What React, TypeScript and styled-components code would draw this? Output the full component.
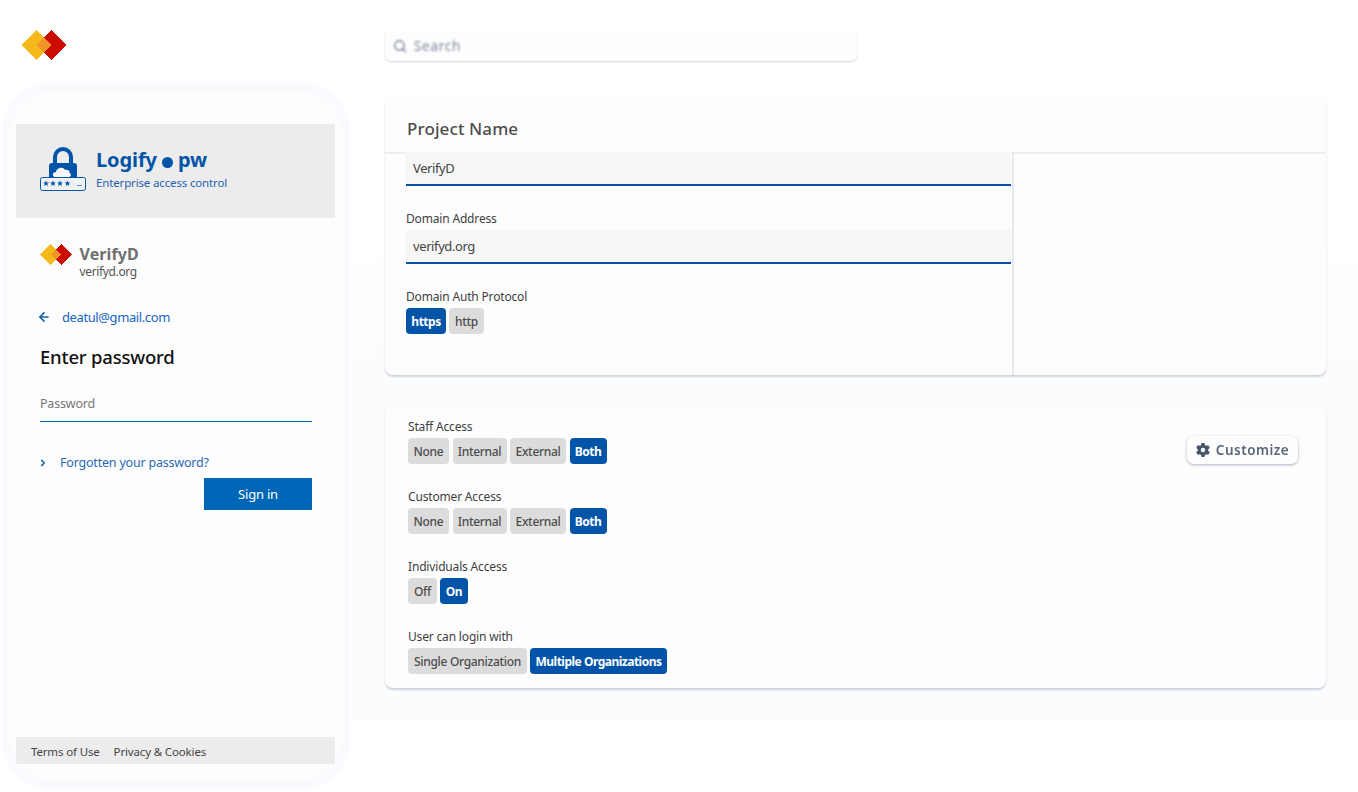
import React from "react";
import styled, { createGlobalStyle } from "styled-components";
import { ArrowLeft, ChevronRight, Search as SearchIcon } from "lucide-react";
import { FaGear } from "react-icons/fa6";

const Global = createGlobalStyle`
  html, body { margin: 0; padding: 0; background: #fff; overflow: hidden; }
  * { box-sizing: border-box; }
  body { font-family: "Noto Sans", "Open Sans", sans-serif; }
`;

const Page = styled.div`
  width: 1358px;
  height: 792px;
  display: grid;
  grid-template-columns: 352px 1fr;
  background: #fff;
`;

const LeftColumn = styled.aside`
  display: flex;
  flex-direction: column;
  padding: 30px 2px 2px 2px;
`;

const TopLogo = styled.div`
  height: 52px;
  padding-left: 19px;
  display: flex;
  align-items: flex-start;
`;

const Frame = styled.div`
  flex: 1;
  border-radius: 48px;
  background: #f9fbfe;
  padding: 10px 8px;
  display: flex;
`;

const LoginPanel = styled.div`
  flex: 1;
  border-radius: 40px;
  background: #fdfdfe;
  padding: 32px 7px 16px 6px;
  display: flex;
  flex-direction: column;
`;

const BrandBar = styled.div`
  height: 94px;
  background: #ececec;
  display: flex;
  align-items: center;
  gap: 10px;
  padding: 0 0 0 24px;
`;

const LogoSlot = styled.div`
  margin-top: -4px;
  display: flex;
`;

const BrandText = styled.div`
  display: flex;
  flex-direction: column;
  gap: 2px;
  margin-top: -5px;
`;

const BrandName = styled.div`
  font-size: 20px;
  line-height: 26px;
  font-weight: 700;
  color: #0254a8;
  display: flex;
  align-items: center;
  letter-spacing: -0.1px;
`;

const BrandDot = styled.span`
  width: 11px;
  height: 11px;
  border-radius: 50%;
  background: #0254a8;
  margin: 5px 5px 0 5px;
`;

const BrandTag = styled.div`
  font-size: 11.500px;
  line-height: 16px;
  color: #1f62ad;
  letter-spacing: -0.15px;
`;

const LoginBody = styled.div`
  flex: 1;
  padding: 0 23px 0 24px;
  display: flex;
  flex-direction: column;
`;

const OrgRow = styled.div`
  display: flex;
  gap: 8px;
  margin-top: 26px;
`;

const OrgName = styled.div`
  font-size: 16px;
  line-height: 20px;
  font-weight: 700;
  color: #6f6f6f;
  letter-spacing: 0.1px;
`;

const OrgDomain = styled.div`
  font-size: 12px;
  line-height: 16px;
  color: #555;
  letter-spacing: -0.35px;
`;

const BackRow = styled.div`
  display: flex;
  align-items: center;
  gap: 11px;
  margin: 28px 0 0 -3px;
  font-size: 13px;
  line-height: 18px;
  color: #1666c0;
  letter-spacing: -0.4px;
`;

const Heading = styled.h1`
  margin: 18px 0 0;
  font-size: 18.500px;
  line-height: 26px;
  font-weight: 500;
  color: #111;
  letter-spacing: -0.2px;
`;

const PasswordField = styled.div`
  margin-top: 19px;
  height: 33px;
  border-bottom: 1px solid #0f62a8;
  font-size: 12.500px;
  line-height: 18px;
  padding-top: 6px;
  color: #777;
  letter-spacing: -0.2px;
`;

const ForgotRow = styled.div`
  display: flex;
  align-items: center;
  gap: 12px;
  margin: 32px 0 0 -2px;
  font-size: 12.500px;
  line-height: 18px;
  color: #2a69b5;
  letter-spacing: -0.2px;
`;

const SignIn = styled.button`
  align-self: flex-end;
  width: 108px;
  height: 32px;
  margin-top: 6px;
  border: 0;
  padding: 0;
  background: #0067b8;
  color: #fff;
  font: 400 13px "Noto Sans", sans-serif;
  letter-spacing: -0.2px;
`;

const FooterBar = styled.div`
  height: 27px;
  background: #ececec;
  display: flex;
  align-items: center;
  gap: 14px;
  padding: 1px 0 0 15px;
  font-size: 11.500px;
  color: #444;
  letter-spacing: -0.15px;
`;

const RightColumn = styled.main`
  height: 720px;
  padding: 31px 32px 0 33px;
  background: linear-gradient(to bottom, #fff 0, #fff 240px, #fbfcfe 370px);
  display: flex;
  flex-direction: column;
`;

const SearchBar = styled.div`
  width: 472px;
  height: 30px;
  border-radius: 6px;
  background: #fdfdfe;
  box-shadow: 0 1px 2px rgba(120, 135, 160, 0.35);
  display: flex;
  align-items: center;
  gap: 7px;
  padding-left: 8px;
  font-size: 13.500px;
  letter-spacing: 0.7px;
  color: #7f8998;
  & > * { display: block; filter: blur(0.8px); }
`;

const Card = styled.section<{ $height: number }>`
  height: ${(p) => p.$height}px;
  background: #fdfdfd;
  border-radius: 8px;
  box-shadow: 0 2px 2px rgba(110, 125, 150, 0.32);
`;

const ProjectCard = styled(Card)`
  margin-top: 34px;
  display: flex;
  flex-direction: column;
`;

const CardTitle = styled.h2`
  height: 59px;
  margin: 0;
  padding: 22px 0 0 22px;
  font-size: 17px;
  line-height: 24px;
  font-weight: 500;
  color: #4d4d4d;
  letter-spacing: 0.1px;
  border-bottom: 2px solid #eceef2;
`;

const CardSplit = styled.div`
  flex: 1;
  display: grid;
  grid-template-columns: 629px 1fr;
`;

const FormColumn = styled.div`
  padding: 0 0 0 21px;
  margin-top: -2px;
  border-right: 2px solid #e6e9ee;
`;

const FieldLabel = styled.div`
  font-size: 12px;
  line-height: 16px;
  padding-top: 1px;
  height: 16px;
  color: #3f3f3f;
  letter-spacing: -0.17px;
`;

const TextValue = styled.div<{ $top?: number }>`
  width: 605px;
  height: 34px;
  margin-top: ${(p) => p.$top ?? 0}px;
  background: #f6f6f6;
  border-bottom: 2px solid #0254a8;
  padding: 7px 0 0 7px;
  font-size: 13px;
  line-height: 18px;
  color: #444;
  letter-spacing: -0.4px;
`;

const FieldGroup = styled.div<{ $top: number }>`
  margin-top: ${(p) => p.$top}px;
`;

const ChoiceRow = styled.div<{ $gap?: number }>`
  display: flex;
  gap: ${(p) => p.$gap ?? 3}px;
  margin-top: 4px;
`;

const Choice = styled.div<{ $on?: boolean; $w: number }>`
  width: ${(p) => p.$w}px;
  height: 26px;
  border-radius: 4px;
  display: flex;
  align-items: center;
  justify-content: center;
  font-size: 12px;
  letter-spacing: ${(p) => (p.$on ? -0.5 : -0.3)}px;
  font-weight: ${(p) => (p.$on ? 700 : 500)};
  background: ${(p) => (p.$on ? "#0254a8" : "#dcdcdc")};
  color: ${(p) => (p.$on ? "#fff" : "#4c4c4c")};
`;

const AccessCard = styled(Card)`
  margin-top: 31px;
  padding: 12px 28px 0 23px;
  display: grid;
  grid-template-columns: 1fr auto;
`;

const AccessList = styled.div`
  display: flex;
  flex-direction: column;
  gap: 24px;
`;

const CustomizeButton = styled.div`
  margin-top: 18px;
  width: 111px;
  height: 28px;
  border-radius: 7px;
  background: #fdfdfe;
  box-shadow: 0 1px 3px rgba(100, 115, 140, 0.55);
  display: flex;
  align-items: center;
  justify-content: center;
  gap: 6px;
  font-size: 13.500px;
  font-weight: 600;
  letter-spacing: 0.5px;
  color: #59677b;
  & > * { display: block; filter: blur(0.7px); }
`;

const Diamonds = ({ size }: { size: number }) => (
  <svg width={size * 1.5} height={size} viewBox="0 0 45 30" shapeRendering="crispEdges">
    <path d="M15 0 30 15 15 30 0 15Z" fill="#f5b91c" />
    <path d="M30 0 45 15 30 30 15 15Z" fill="#cc0c00" />
    <path d="M22.500 7.500 30 15 22.500 22.500 15 15Z" fill="#f19528" />
  </svg>
);

const Star = ({ x }: { x: number }) => (
  <path
    transform={`translate(${x} 0)`}
    d="M0 33.500l.9 2h2.100l-1.700 1.300.6 2.200-1.900-1.300-1.900 1.300.6-2.200-1.700-1.300h2.100Z"
  />
);

const LockLogo = () => (
  <svg width="46" height="44" viewBox="0 0 46 44">
    <path d="M15 17V10a8 8 0 0 1 16 0v7" fill="none" stroke="#0254a8" strokeWidth="4" />
    <path d="M9 19a3 3 0 0 1 3-3h22a3 3 0 0 1 3 3v11H9Z" fill="#0254a8" />
    <path d="M15 30c-3-.5-3-5 1-5 .5-4 7-6 9-2 3-1 5 1 4.500 3 2 .5 2 4-.5 4Z" fill="#f4f6f8" />
    <rect x="0.500" y="30.500" width="45" height="13" rx="2" fill="#f0f2f5" stroke="#0254a8" />
    <g fill="#0254a8">
      <Star x={6} />
      <Star x={13} />
      <Star x={20} />
      <Star x={27.500} />
      <rect x="37" y="38" width="5" height="1" opacity=".6" />
    </g>
  </svg>
);

const groups = [
  { label: "Staff Access", gap: 3.500, items: [["None", 41], ["Internal", 54], ["External", 56], ["Both", 37, true]] },
  { label: "Customer Access", gap: 3.500, items: [["None", 41], ["Internal", 54], ["External", 56], ["Both", 37, true]] },
  { label: "Individuals Access", gap: 3, items: [["Off", 29], ["On", 28, true]] },
  { label: "User can login with", gap: 3, items: [["Single Organization", 119], ["Multiple Organizations", 137, true]] },
] as { label: string; gap: number; items: [string, number, boolean?][] }[];

export default function App() {
  return (
    <Page>
      <Global />
      <LeftColumn>
        <TopLogo>
          <Diamonds size={30} />
        </TopLogo>
        <Frame>
          <LoginPanel>
            <BrandBar>
              <LogoSlot>
                <LockLogo />
              </LogoSlot>
              <BrandText>
                <BrandName>
                  Logify<BrandDot />pw
                </BrandName>
                <BrandTag>Enterprise access control</BrandTag>
              </BrandText>
            </BrandBar>
            <LoginBody>
              <OrgRow>
                <Diamonds size={21} />
                <div>
                  <OrgName>VerifyD</OrgName>
                  <OrgDomain>verifyd.org</OrgDomain>
                </div>
              </OrgRow>
              <BackRow>
                <ArrowLeft size={14} strokeWidth={2.800} color="#0f62a8" />
                deatul@gmail.com
              </BackRow>
              <Heading>Enter password</Heading>
              <PasswordField>Password</PasswordField>
              <ForgotRow>
                <ChevronRight size={10} strokeWidth={4} color="#0f5ea8" />
                Forgotten your password?
              </ForgotRow>
              <SignIn>Sign in</SignIn>
            </LoginBody>
            <FooterBar>
              <span>Terms of Use</span>
              <span>Privacy &amp; Cookies</span>
            </FooterBar>
          </LoginPanel>
        </Frame>
      </LeftColumn>
      <RightColumn>
        <SearchBar>
          <SearchIcon size={14} strokeWidth={2.200} color="#6d7887" />
          <span>Search</span>
        </SearchBar>
        <ProjectCard $height={280}>
          <CardTitle>Project Name</CardTitle>
          <CardSplit>
            <FormColumn>
              <TextValue>VerifyD</TextValue>
              <FieldGroup $top={24}>
                <FieldLabel>Domain Address</FieldLabel>
                <TextValue $top={4}>verifyd.org</TextValue>
              </FieldGroup>
              <FieldGroup $top={24}>
                <FieldLabel>Domain Auth Protocol</FieldLabel>
                <ChoiceRow>
                  <Choice $on $w={40}>https</Choice>
                  <Choice $w={35}>http</Choice>
                </ChoiceRow>
              </FieldGroup>
            </FormColumn>
            <div />
          </CardSplit>
        </ProjectCard>
        <AccessCard $height={282}>
          <AccessList>
            {groups.map((g) => (
              <div key={g.label}>
                <FieldLabel>{g.label}</FieldLabel>
                <ChoiceRow $gap={g.gap}>
                  {g.items.map(([t, w, on]) => (
                    <Choice key={t} $w={w} $on={on}>{t}</Choice>
                  ))}
                </ChoiceRow>
              </div>
            ))}
          </AccessList>
          <CustomizeButton>
            <FaGear size={14} color="#465568" />
            <span>Customize</span>
          </CustomizeButton>
        </AccessCard>
      </RightColumn>
    </Page>
  );
}
